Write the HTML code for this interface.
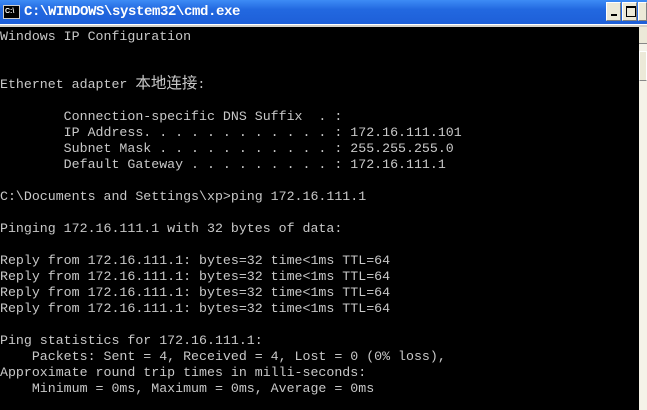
<!DOCTYPE html>
<html><head><meta charset="utf-8"><style>
body{margin:0;width:647px;height:410px;overflow:hidden;background:#000;position:relative}
#title{position:absolute;left:0;top:0;width:647px;height:24px;background:linear-gradient(#3d8cf5,#2268e0 40%,#1e5fd8);}
#title .t{position:absolute;left:24px;top:4px;color:#fff;font:bold 14px "Liberation Mono",monospace;letter-spacing:-0.4px}
#icon{position:absolute;left:3px;top:5px;width:15px;height:12px;background:#000;border:1px solid #ccc;color:#fff;font:bold 7px "Liberation Sans",sans-serif;line-height:11px;text-indent:1px}
.btn{position:absolute;top:2px;width:15px;height:19px;background:#ece9d8;border:1px solid #fff;border-right-color:#808080;border-bottom-color:#808080;box-sizing:border-box}
#sep{position:absolute;left:0;top:24px;width:647px;height:3px;background:#d4d0c8;border-top:1px solid #fff;box-sizing:border-box}
#sb{position:absolute;left:639px;top:27px;width:8px;height:383px;background:#f5f2e8}
#sb .up{position:absolute;left:0;top:0;width:8px;height:16px;background:#ece9d8;border-bottom:1px solid #888}
#sb .th{position:absolute;left:0;top:24px;width:8px;height:30px;background:#ece9d8;border:1px solid #fff;border-bottom-color:#888;box-sizing:border-box}
pre{position:absolute;left:0;top:29px;margin:0;color:#c8c8c8;font:13.28px/16px "Liberation Mono","WenQuanYi Zen Hei",monospace}
.cj{font-size:15.5px;line-height:10px}
</style></head><body>
<div id="title"><div id="icon">C:\</div><div class="t">C:\WINDOWS\system32\cmd.exe</div>
<div class="btn" style="left:606px"><div style="position:absolute;left:4px;top:11px;width:6px;height:2px;background:#000"></div></div>
<div class="btn" style="left:622px"><div style="position:absolute;left:3px;top:3px;width:8px;height:8px;border:1px solid #000;border-top-width:2px"></div></div>
<div class="btn" style="left:638px;width:9px"></div>
</div>
<div id="sep"></div>
<div id="sb"><div class="up"></div><div class="th"></div></div>
<pre>Windows IP Configuration


Ethernet adapter <span class="cj">本地连接</span>:

        Connection-specific DNS Suffix  . :
        IP Address. . . . . . . . . . . . : 172.16.111.101
        Subnet Mask . . . . . . . . . . . : 255.255.255.0
        Default Gateway . . . . . . . . . : 172.16.111.1

C:\Documents and Settings\xp&gt;ping 172.16.111.1

Pinging 172.16.111.1 with 32 bytes of data:

Reply from 172.16.111.1: bytes=32 time&lt;1ms TTL=64
Reply from 172.16.111.1: bytes=32 time&lt;1ms TTL=64
Reply from 172.16.111.1: bytes=32 time&lt;1ms TTL=64
Reply from 172.16.111.1: bytes=32 time&lt;1ms TTL=64

Ping statistics for 172.16.111.1:
    Packets: Sent = 4, Received = 4, Lost = 0 (0% loss),
Approximate round trip times in milli-seconds:
    Minimum = 0ms, Maximum = 0ms, Average = 0ms</pre>
</body></html>
